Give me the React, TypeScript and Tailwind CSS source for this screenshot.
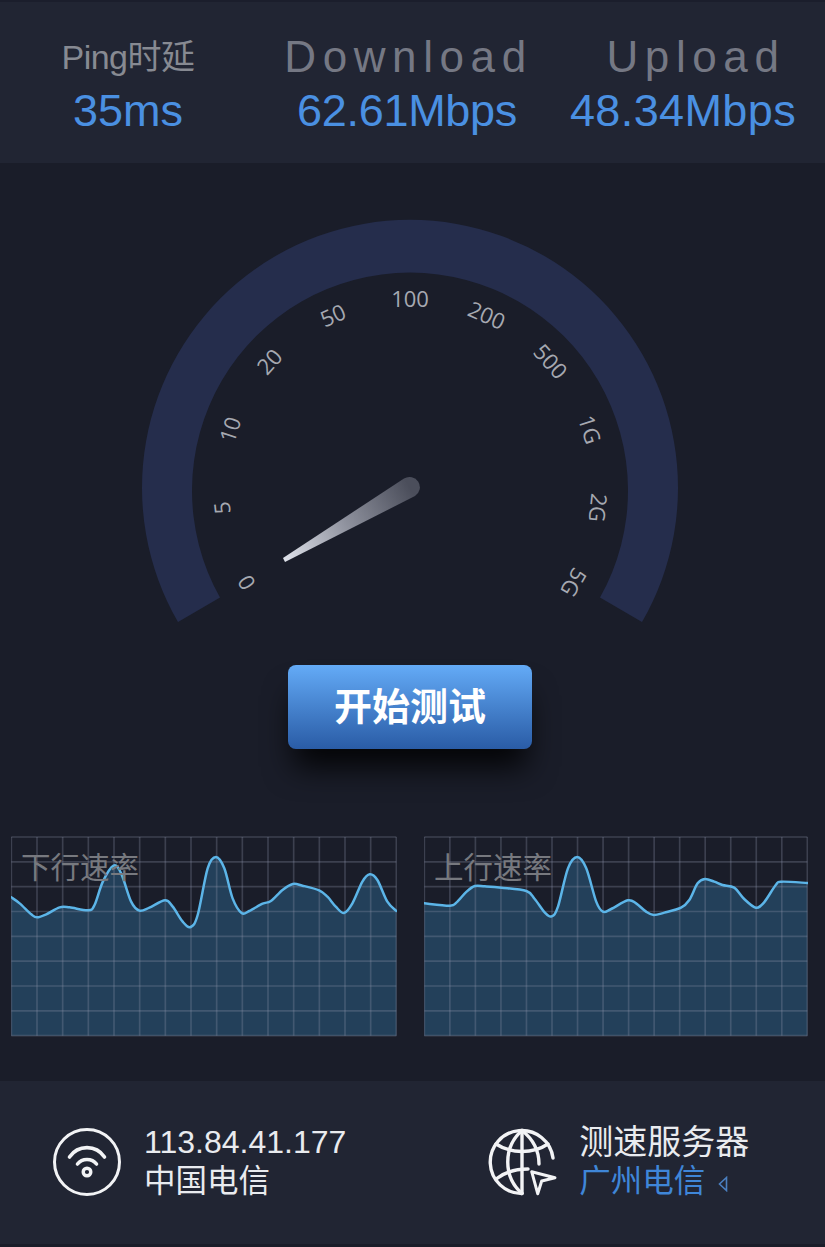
const dlPts: [number, number][] = [[35,217],[60,235],[95,268],[112,277],[140,268],[180,247],[210,247],[266,256],[285,240],[310,170],[342,122],[365,145],[395,230],[420,257],[450,248],[497,226],[520,245],[550,290],[574,306],[595,270],[625,130],[650,96],[675,130],[700,220],[727,264],[750,258],[790,236],[815,228],[850,195],[881,177],[910,182],[960,196],[985,215],[1010,245],[1035,264],[1060,235],[1090,170],[1112,148],[1135,165],[1165,230],[1192,258]]
const ulPts: [number, number][] = [[28,235],[105,242],[125,232],[155,200],[180,183],[210,184],[260,188],[335,198],[360,222],[390,262],[411,274],[430,245],[460,130],[488,96],[515,130],[545,230],[565,260],[590,252],[640,226],[665,235],[695,260],[718,270],[750,263],[800,248],[825,225],[850,175],[872,162],[900,170],[925,180],[960,188],[990,222],[1025,248],[1050,232],[1085,180],[1103,170],[1180,174]]

const gaugeLabels = ["0", "5", "10", "20", "50", "100", "200", "500", "1G", "2G", "5G"]

// catmull-rom through the sampled points
function smooth(pts: [number, number][]) {
  let d = `M${pts[0][0]} ${pts[0][1]}`
  for (let i = 0; i < pts.length - 1; i++) {
    const p0 = pts[i - 1] ?? pts[i]
    const p1 = pts[i]
    const p2 = pts[i + 1]
    const p3 = pts[i + 2] ?? p2
    d += ` C${p1[0] + (p2[0] - p0[0]) / 6} ${p1[1] + (p2[1] - p0[1]) / 6} ${p2[0] - (p3[0] - p1[0]) / 6} ${p2[1] - (p3[1] - p1[1]) / 6} ${p2[0]} ${p2[1]}`
  }
  return d
}

function Stat({ label, value, labelClass, valueClass }: { label: string; value: string; labelClass: string; valueClass: string }) {
  return (
    <div className="flex flex-col items-center">
      <span className={`leading-[50px] ${labelClass}`}>{label}</span>
      <span className={`mt-[2px] text-[45px] leading-[54px] text-[#4a90e2] ${valueClass}`}>{value}</span>
    </div>
  )
}

function Gauge() {
  return (
    <svg width="825" height="470" viewBox="0 163 825 470" className="block">
      <path
        d="M178 622 A268 268 0 1 1 642 622 L600 597.5 A218 218 0 1 0 220 597.5 Z"
        fill="#252d4c"
      />
      {gaugeLabels.map((label, i) => {
        const deg = -120 + i * 24
        const rad = (deg * Math.PI) / 180
        const x = 410 + 190 * Math.sin(rad)
        const y = 488 - 190 * Math.cos(rad)
        return (
          <text
            key={label}
            x={x}
            y={y}
            transform={`rotate(${deg} ${x} ${y})`}
            textAnchor="middle"
            dominantBaseline="central"
            fontSize="22"
            fill="#a6a9b1"
            style={{ fontFamily: '"Open Sans", sans-serif', fontWeight: 400 }}
          >
            {label}
          </text>
        )
      })}
      <defs>
        <linearGradient id="needle" gradientUnits="userSpaceOnUse" x1="284" y1="560" x2="410" y2="488">
          <stop offset="0" stopColor="#dfe2ea" />
          <stop offset="0.5" stopColor="#8e919d" />
          <stop offset="1" stopColor="#4b4e5b" />
        </linearGradient>
      </defs>
      <path
        d="M283 558 L404 478.5 A10 10 0 0 1 415 496 L285 562 Z"
        fill="url(#needle)"
      />
    </svg>
  )
}

function Chart({ label, pts, x0, x1, width }: { label: string; pts: [number, number][]; x0: number; x1: number; width: string }) {
  const line = smooth(pts)
  const cols = Array.from({ length: 16 }, (_, i) => x0 + ((x1 - x0) * i) / 15)
  const rows = Array.from({ length: 9 }, (_, i) => 36 + (596 * i) / 8)
  return (
    <div className={`relative h-[201px] ${width}`}>
      <svg viewBox={`${x0 - 1} 33 ${x1 - x0 + 3} 603`} preserveAspectRatio="none" className="block h-full w-full">
        <path d={`${line} L${x1} 632 L${x0} 632 Z`} fill="#23405a" />
        {cols.map((x) => (
          <line key={x} x1={x} x2={x} y1={36} y2={632} stroke="#8b93a8" strokeOpacity="0.3" strokeWidth="5" />
        ))}
        {rows.map((y) => (
          <line key={y} x1={x0} x2={x1} y1={y} y2={y} stroke="#8b93a8" strokeOpacity="0.3" strokeWidth="5" />
        ))}
        <path d={line} fill="none" stroke="#5cb5e8" strokeWidth="7.5" strokeLinecap="round" />
      </svg>
      <span className="absolute left-[10px] top-[15px] text-[29.5px] leading-[34px] text-[#77797f]">{label}</span>
    </div>
  )
}

function WifiIcon() {
  return (
    <svg width="70" height="70" viewBox="0 0 70 70" fill="none" stroke="#f2f3f5" strokeWidth="3" strokeLinecap="round">
      <circle cx="35" cy="35" r="32.5" />
      <path d="M17.5 30 C26 17.5 44 17.5 52.5 30" strokeWidth="3.6" />
      <path d="M25.5 37 C30 31 40 31 44.5 37" strokeWidth="3.6" />
      <circle cx="35" cy="45" r="3.8" strokeWidth="3.4" />
    </svg>
  )
}

function GlobeIcon() {
  return (
    <svg width="70" height="70" viewBox="0 0 70 70" fill="none" stroke="#f2f3f5" strokeWidth="3.4" strokeLinecap="round" strokeLinejoin="round">
      <path d="M66 31 A31.5 31.5 0 1 0 35 66.5" />
      <path d="M35 3.5 L35 66" />
      <path d="M35 3.5 C16 20 16 50 35 66.5" />
      <path d="M35 3.5 C47 13 52 24 52 37" />
      <path d="M9 17 C24 27 46 27 61 17" />
      <path d="M9 52 C18 45 28 42 41 42" />
      <path d="M44.7 44.7 L68 50.7 L54.7 54 L50.7 66.7 Z" strokeWidth="3" />
    </svg>
  )
}

export default function App() {
  return (
    <div
      className="flex h-[1247px] w-[825px] flex-col overflow-hidden bg-[#1a1d29]"
      style={{ fontFamily: '"Liberation Sans", "Noto Sans CJK SC", sans-serif' }}
    >
      <header className="flex h-[163px] shrink-0 items-start border-t-2 border-[#1b1e2c] bg-[#212533] pl-[59px] pt-[30px]">
        <div className="w-[138px]">
          <Stat label="Ping时延" value="35ms" labelClass="text-[34px] tracking-[-0.5px] text-[#878a92]" valueClass="" />
        </div>
        <div className="ml-[90px] w-[240px]">
          <Stat label="Download" value="62.61Mbps" labelClass="pl-[3px] text-[44px] tracking-[6.6px] text-[#757884]" valueClass="tracking-[-0.3px]" />
        </div>
        <div className="ml-[43px] w-[226px]">
          <Stat label="Upload" value="48.34Mbps" labelClass="pl-[26px] text-[44px] tracking-[6.6px] text-[#757884]" valueClass="tracking-[0.4px]" />
        </div>
      </header>

      <Gauge />

      <div className="flex justify-center pr-[5px] pt-[32px]">
        <button className="h-[84px] w-[244px] rounded-[8px] bg-gradient-to-b from-[#64abf7] to-[#2a5ca6] text-[38px] font-semibold text-white shadow-[0_24px_30px_-6px_rgba(0,0,0,0.85)]">
          开始测试
        </button>
      </div>

      <div className="flex justify-between pl-[11px] pr-[17px] pt-[87px]">
        <Chart label="下行速率" pts={dlPts} x0={35} x1={1192} width="w-[386px]" />
        <Chart label="上行速率" pts={ulPts} x0={28} x1={1180} width="w-[384px]" />
      </div>

      <footer className="mt-[44px] flex h-[163px] shrink-0 items-start bg-[#212533] pl-[52px] pt-[46px]">
        <WifiIcon />
        <div className="ml-[22px] -mt-[4px] flex flex-col text-[#e9ebef]">
          <span className="text-[32px] leading-[39px]">113.84.41.177</span>
          <span className="text-[31.5px] leading-[39px]">中国电信</span>
        </div>
        <div className="ml-[141px]">
          <GlobeIcon />
        </div>
        <div className="ml-[22px] -mt-[4px] flex flex-col text-[#e9ebef]">
          <span className="text-[34px] leading-[39px]">测速服务器</span>
          <span className="flex items-center text-[31.5px] leading-[39px] text-[#3f86d8]">
            广州电信
            <svg width="10" height="16" viewBox="0 0 10 16" fill="none" stroke="#4a7fc0" strokeWidth="1.6" className="ml-[13px] mt-[4px]">
              <path d="M8.5 1.5 L1.5 8 L8.5 14.5 Z" />
            </svg>
          </span>
        </div>
      </footer>
    </div>
  )
}
